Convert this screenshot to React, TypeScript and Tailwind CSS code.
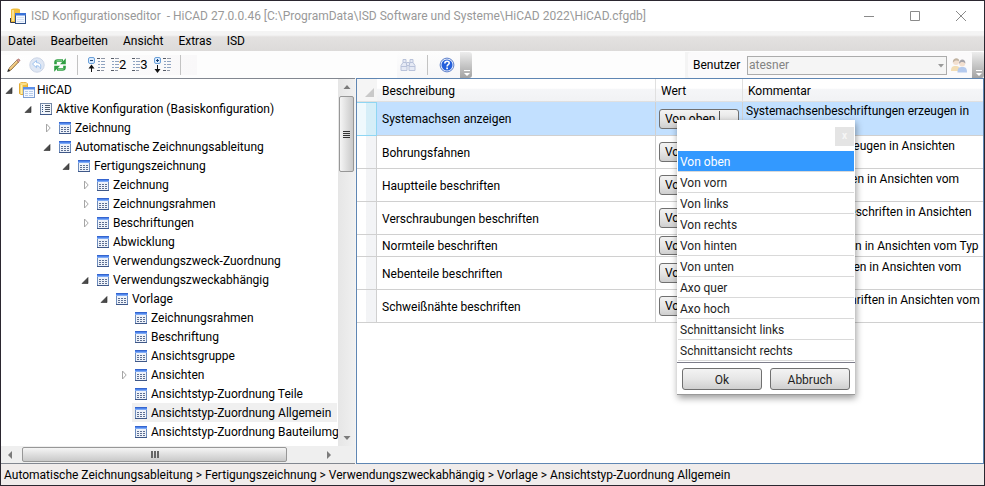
import { useState } from "react"
import type { ReactNode } from "react"
import clsx from "clsx"

type NodeIcon = "db" | "list" | "table"

interface TreeNode {
  label: string
  level: number
  state?: "open" | "closed"
  icon?: NodeIcon
}

const tree: TreeNode[] = [
  { label: "HiCAD", level: 0, state: "open", icon: "db" },
  { label: "Aktive Konfiguration (Basiskonfiguration)", level: 1, state: "open", icon: "list" },
  { label: "Zeichnung", level: 2, state: "closed" },
  { label: "Automatische Zeichnungsableitung", level: 2, state: "open" },
  { label: "Fertigungszeichnung", level: 3, state: "open" },
  { label: "Zeichnung", level: 4, state: "closed" },
  { label: "Zeichnungsrahmen", level: 4, state: "closed" },
  { label: "Beschriftungen", level: 4, state: "closed" },
  { label: "Abwicklung", level: 4 },
  { label: "Verwendungszweck-Zuordnung", level: 4 },
  { label: "Verwendungszweckabhängig", level: 4, state: "open" },
  { label: "Vorlage", level: 5, state: "open" },
  { label: "Zeichnungsrahmen", level: 6 },
  { label: "Beschriftung", level: 6 },
  { label: "Ansichtsgruppe", level: 6 },
  { label: "Ansichten", level: 6, state: "closed" },
  { label: "Ansichtstyp-Zuordnung Teile", level: 6 },
  { label: "Ansichtstyp-Zuordnung Allgemein", level: 6 },
  { label: "Ansichtstyp-Zuordnung Bauteilumgebung", level: 6 },
]

const rows = [
  { name: "Systemachsen anzeigen", comment: "Systemachsenbeschriftungen erzeugen in" },
  { name: "Bohrungsfahnen", comment: "Bohrungsfahnen erzeugen in Ansichten" },
  { name: "Hauptteile beschriften", comment: "Hauptteile beschriften in Ansichten vom" },
  { name: "Verschraubungen beschriften", comment: "Verschraubungen beschriften in Ansichten" },
  { name: "Normteile beschriften", comment: "Normteile beschriften in Ansichten vom Typ", short: true },
  { name: "Nebenteile beschriften", comment: "Nebenteile beschriften in Ansichten vom" },
  { name: "Schweißnähte beschriften", comment: "Schweißnähte beschriften in Ansichten vom" },
]

const options = [
  "Von oben",
  "Von vorn",
  "Von links",
  "Von rechts",
  "Von hinten",
  "Von unten",
  "Axo quer",
  "Axo hoch",
  "Schnittansicht links",
  "Schnittansicht rechts",
]

const buttonFace =
  "rounded-[3px] border border-[#707070] bg-linear-to-b from-[#f3f3f3] via-[#e6e6e6] to-[#cfcfcf]"

function DatabaseIcon({ className }: { className?: string }) {
  return (
    <svg viewBox="0 0 16 16" className={clsx("h-4 w-4 shrink-0", className)}>
      <path d="M0.5 2c0-2 8-2 8 0v9.500c0 1.500-8 1.500-8 0z" fill="#f0bd3c" stroke="#e3ab35" />
      <path d="M1.500 3h2v9h-2z" fill="#fff0b0" />
      <ellipse cx="4.500" cy="1.900" rx="3.500" ry="1.100" fill="#fbe08a" />
      <rect x="4.500" y="5.500" width="11" height="10" fill="#f4f8ff" stroke="#7f9fd3" />
      <rect x="4" y="5" width="12" height="2.5" fill="#5b8ee8" />
      <path d="M6 9.500h3M10 9.500h4M6 11.500h3M10 11.500h4M6 13.500h3M10 13.500h4" stroke="#b7cbe9" />
    </svg>
  )
}

function AppIcon() {
  return (
    <svg viewBox="0 0 16 16" className="h-4 w-4 shrink-0">
      <path d="M1 1.500c0-1.500 9-1.500 9 0v12.500H1z" fill="#f0bd3c" />
      <path d="M2 2h2v11H2z" fill="#fbe28e" />
      <path d="M0.500 10v4.500H6" fill="none" stroke="#3b3b46" />
      <rect x="5.500" y="5.500" width="10" height="10" fill="#f4f8ff" stroke="#2f4f86" />
      <rect x="5" y="5" width="11" height="2.500" fill="#3a72d8" />
      <path d="M7 9.500h7M7 11.500h7M7 13.500h7" stroke="#d5e1f4" />
    </svg>
  )
}

function TableIcon() {
  return (
    <svg viewBox="0 0 12 12" shapeRendering="crispEdges" className="h-3 w-3 shrink-0">
      <rect width="12" height="12" fill="#6d8cbd" />
      <rect width="12" height="1" fill="#3565cf" />
      <rect y="1" width="12" height="1" fill="#4f86ec" />
      <rect y="2" width="12" height="1" fill="#7faaf5" />
      <rect x="1" y="3" width="10" height="8" fill="#eef2f9" />
      <path
        d="M2 5.5h2M5 5.5h2M8 5.5h2M2 7.5h2M5 7.5h2M8 7.5h2M2 9.5h2M5 9.5h2M8 9.5h2"
        stroke="#5d6f92"
      />
      <rect x="0" y="11" width="12" height="1" fill="#3f5888" />
    </svg>
  )
}

function ListIcon() {
  return (
    <svg viewBox="0 0 12 12" shapeRendering="crispEdges" className="h-3 w-3 shrink-0">
      <rect width="12" height="12" fill="#7488a6" />
      <rect x="1" y="1" width="10" height="10" fill="#f1f5fb" />
      <path d="M2 2.5h1M2 4.5h1M2 6.5h1M2 8.5h1" stroke="#2b4f86" />
      <path d="M5 2.5h5M5 4.5h5M5 6.5h5M5 8.5h5" stroke="#4e5a6a" />
      <rect x="0" y="11" width="12" height="1" fill="#3f5888" />
    </svg>
  )
}

function Expander({ state }: { state?: "open" | "closed" }) {
  return (
    <svg viewBox="0 0 10 10" className="h-[10px] w-[10px] shrink-0">
      {state === "open" && <path d="M8 2.500v6H2z" fill="#4a4a4a" stroke="#262626" strokeWidth="0.6" />}
      {state === "closed" && <path d="M4.500 1v8l3.700-4z" fill="#fff" stroke="#a6a6a6" />}
    </svg>
  )
}

function PencilIcon() {
  return (
    <svg viewBox="0 0 16 16" className="h-4 w-4">
      <path d="M2.500 14l.8-3L10.800 3.300l1.800 1.700-7.600 8z" fill="#efc06c" stroke="#6b4a20" strokeWidth="0.7" />
      <path d="M4 11.500l7.300-7.600" stroke="#fbe6b8" strokeWidth="0.8" />
      <path d="M10.800 3.300l1-1c.9-.9 2.700.8 1.900 1.700l-1.100 1z" fill="#e0a09a" stroke="#8d4b46" strokeWidth="0.6" />
      <path d="M1.200 15l1-3 2.100 2z" fill="#222" />
    </svg>
  )
}

function UndoIcon() {
  return (
    <svg viewBox="0 0 16 16" className="h-4 w-4">
      <circle cx="8" cy="8" r="7.200" fill="#dfe7f4" stroke="#ccd5e6" />
      <path d="M3.500 7l4-3.500v2.200c3.500 0 5 2 4 6-.7-2-1.800-3-4-3v2z" fill="#fff" stroke="#9fc3ef" />
    </svg>
  )
}

function RefreshIcon() {
  return (
    <svg viewBox="0 0 16 16" className="h-4 w-4">
      <g fill="none" stroke="#2f9e42" strokeWidth="2.600">
        <path d="M3.500 7.200V5.500c0-1 .8-2 2-2H11" />
        <path d="M12.500 8.800v1.700c0 1-.8 2-2 2H5" />
      </g>
      <path d="M13.800 1.200v6H8zM2.200 14.800v-6H8z" fill="#2f9e42" />
      <path d="M4 4.500c.6-.9 2-1.100 6-1.100M12 11.500c-.6.900-2 1.100-6 1.100" fill="none" stroke="#98dda0" strokeWidth="0.8" />
    </svg>
  )
}

// Small tree outline used by all four level buttons
function Lines({ x }: { x: number }) {
  return (
    <g stroke="#8f96a3" transform={`translate(${x} 0)`}>
      <path d="M0 1.500h3M0 13.500h3" stroke="#555b66" />
      <path d="M4 1.500h4M4 13.500h3" />
      <path d="M1 4.500h2M4 4.500h4M1 7.500h2M4 7.500h4M1 10.500h2M4 10.500h4" stroke="#8fa3c0" />
    </g>
  )
}

function CollapseIcon({ expand }: { expand?: boolean }) {
  return (
    <svg viewBox="0 0 17 16" className="h-4 w-[17px]">
      <rect x="0.5" y="0.5" width="6" height="6" rx="1.500" fill="#d9ebff" stroke="#6ba0d8" />
      <path d="M2 3.500h3" stroke="#173e73" />
      {expand && <path d="M3.500 2v3" stroke="#173e73" />}
      {expand ? (
        <path d="M3 8h1v4h2.500l-3 4-3-4H3z" fill="#111" />
      ) : (
        <path d="M3 15h1v-3.500h2.500l-3-4-3 4H3z" fill="#111" />
      )}
      <g shapeRendering="crispEdges">
        <Lines x={9} />
      </g>
    </svg>
  )
}

function LevelIcon({ level }: { level: number }) {
  return (
    <span className="flex h-4 items-center">
      <svg viewBox="0 0 8 16" shapeRendering="crispEdges" className="h-4 w-2">
        <Lines x={0} />
      </svg>
      <span className="text-[13px] leading-4 text-black">{level}</span>
    </span>
  )
}

function BinocularsIcon() {
  return (
    <svg viewBox="0 0 16 16" className="h-4 w-4">
      <g fill="#e6eaf5" stroke="#b9c2da">
        <path d="M3 2.500h3v3l1 3v5H1v-5l2-3zM10 2.500h3v3l2 3v5H9v-5l1-3z" />
        <path d="M6.500 5.500h3v3h-3z" />
        <path d="M1 9.500h6M9 9.500h6M3 5.500h3M10 5.500h3" />
      </g>
    </svg>
  )
}

function HelpIcon() {
  return (
    <svg viewBox="0 0 16 16" className="h-4 w-4">
      <circle cx="8" cy="8" r="6.900" fill="#e8eefa" stroke="#4f74c4" strokeWidth="0.900" />
      <circle cx="8" cy="8" r="5.500" fill="#2560dc" />
      <path d="M5.800 6.500c0-3.200 4.600-2.900 4.400-.3-.1 1.400-2.100 1.500-2.100 3.200" fill="none" stroke="#fff" strokeWidth="1.600" />
      <rect x="7.200" y="10.500" width="1.800" height="1.700" fill="#fff" />
    </svg>
  )
}

function UsersIcon() {
  return (
    <svg viewBox="0 0 16 16" className="h-4 w-4 opacity-60">
      <path d="M0 14c0-4 1.500-5 4.500-5S9 10 9 14z" fill="#eecb86" />
      <circle cx="5" cy="5" r="3" fill="#efcfb5" />
      <path d="M1.800 5.500C1.500 0 8.500 0 8.200 4 6 3 4 3 1.800 5.500z" fill="#9b8468" />
      <path d="M6.500 15.500c0-4.500 1.500-5.500 4.700-5.500S16 11 16 15.500z" fill="#87abe6" />
      <circle cx="11.200" cy="6.500" r="3" fill="#efcfb5" />
      <path d="M8 7C7.700 1 14.700 1 14.400 6.500 12 4.500 10 4.500 8 7z" fill="#6f6a72" />
    </svg>
  )
}

function ToolButton({ label, children, disabled }: { label: string; children: ReactNode; disabled?: boolean }) {
  return (
    <button type="button" aria-label={label} disabled={disabled} className="flex shrink-0 items-center">
      {children}
    </button>
  )
}

function Separator() {
  return <div className="h-5 w-px shrink-0 bg-[#c3c3c3]" />
}

function OverflowGrip() {
  return (
    <div className="flex w-3 shrink-0 items-end justify-end self-stretch rounded-r-[3px] bg-linear-to-b from-[#ededed] to-[#a3a3a3] pr-[2px] pb-[2px]">
      <svg viewBox="0 0 6 6" className="h-[6px] w-[6px]">
        <path d="M0 0h6v1H0zM0 3h6L3 6z" fill="#fff" />
      </svg>
    </div>
  )
}

function TitleBar() {
  return (
    <header className="flex h-[30px] items-center bg-white pl-[9px] text-[#999]">
      <AppIcon />
      <h1 className="ml-[5px] truncate whitespace-pre">
        {"ISD Konfigurationseditor  - HiCAD 27.0.0.46 [C:\\ProgramData\\ISD Software und Systeme\\HiCAD 2022\\HiCAD.cfgdb]"}
      </h1>
      <div className="ml-auto flex h-full">
        <button type="button" aria-label="Minimieren" className="flex w-[46px] items-center justify-center">
          <svg viewBox="0 0 10 10" className="h-[10px] w-[10px]">
            <path d="M0 5.500h10" stroke="#8a8a8a" />
          </svg>
        </button>
        <button type="button" aria-label="Maximieren" className="flex w-[46px] items-center justify-center">
          <svg viewBox="0 0 10 10" className="h-[10px] w-[10px]">
            <path d="M0.500 0.500h9v9h-9z" fill="none" stroke="#8a8a8a" />
          </svg>
        </button>
        <button type="button" aria-label="Schließen" className="flex w-[46px] items-center justify-center">
          <svg viewBox="0 0 10 10" className="h-[10px] w-[10px]">
            <path d="M0 0l10 10M10 0L0 10" stroke="#8a8a8a" />
          </svg>
        </button>
      </div>
    </header>
  )
}

function MenuBar() {
  return (
    <nav className="flex h-5 items-center gap-[15px] bg-linear-to-b from-[#f4f4f4] from-20% via-[#e3e1e0] via-30% to-[#dcdad9] pl-[7px]">
      {["Datei", "Bearbeiten", "Ansicht", "Extras", "ISD"].map((item) => (
        <button key={item} type="button">
          {item}
        </button>
      ))}
    </nav>
  )
}

function Toolbar() {
  return (
    <div className="flex h-[27px] items-center bg-[#fdfdfd] pt-px">
      <div className="flex h-5 items-center bg-linear-to-r from-white to-[#f9f8f9] pl-[5px]">
        <div className="flex items-center gap-[7px]">
          <ToolButton label="Bearbeiten">
            <PencilIcon />
          </ToolButton>
          <ToolButton label="Rückgängig" disabled>
            <UndoIcon />
          </ToolButton>
          <ToolButton label="Aktualisieren">
            <RefreshIcon />
          </ToolButton>
        </div>
        <div className="flex items-center gap-[6px] pl-[9px]">
          <Separator />
          <div className="flex items-center gap-[6px] pl-1">
            <ToolButton label="Alles zuklappen">
              <CollapseIcon />
            </ToolButton>
            <ToolButton label="Ebene 2">
              <LevelIcon level={2} />
            </ToolButton>
            <ToolButton label="Ebene 3">
              <LevelIcon level={3} />
            </ToolButton>
            <ToolButton label="Alles aufklappen">
              <CollapseIcon expand />
            </ToolButton>
          </div>
          <div className="pr-4 pl-[3px]">
            <Separator />
          </div>
        </div>
      </div>
      <div className="w-[200px]" />
      <div className="flex h-full items-center gap-[11px] bg-linear-to-b from-[#fdfdfd] to-[#f6f6f8] pr-[5px] pl-[3px]">
        <ToolButton label="Suchen" disabled>
          <BinocularsIcon />
        </ToolButton>
        <Separator />
        <ToolButton label="Hilfe">
          <HelpIcon />
        </ToolButton>
      </div>
      <OverflowGrip />
      <div className="ml-auto flex h-full items-center bg-[#f4f4f4] pl-[3px]">
        <div className="flex h-full items-center rounded-[3px] bg-[#fbfafb] pr-[5px] pl-[5px]">
          <label htmlFor="benutzer" className="w-[54px]">
            Benutzer
          </label>
          <div className="relative mr-1 flex">
            <select
              id="benutzer"
              disabled
              className="h-[19px] w-[200px] appearance-none border border-[#acacac] bg-[#f5f5f5] pl-px text-[#838383]"
            >
              <option>atesner</option>
            </select>
            <svg viewBox="0 0 6 4" className="pointer-events-none absolute top-2 right-[3px] h-1 w-[6px]">
              <path d="M0 0h6L3 3.500z" fill="#9a9a9a" />
            </svg>
          </div>
          <ToolButton label="Benutzerverwaltung" disabled>
            <UsersIcon />
          </ToolButton>
        </div>
        <OverflowGrip />
      </div>
    </div>
  )
}

function TreeRow({ node, selected, onSelect }: { node: TreeNode; selected: boolean; onSelect: () => void }) {
  return (
    <li
      role="treeitem"
      aria-selected={selected}
      className="flex h-[19px] items-center"
      style={{ paddingLeft: node.level * 19 + 3 }}
    >
      <Expander state={node.state} />
      <button
        type="button"
        onClick={onSelect}
        className={clsx(
          "mr-px flex h-full flex-1 items-center whitespace-nowrap",
          node.level === 0 ? "ml-[5px] gap-[2px]" : "ml-1 gap-1 pl-[3px]",
          selected && "bg-[#f0f0f0]",
        )}
      >
        {node.icon === "db" ? <DatabaseIcon /> : node.icon === "list" ? <ListIcon /> : <TableIcon />}
        {node.label}
      </button>
    </li>
  )
}

function Arrow({ d }: { d: string }) {
  return (
    <svg viewBox="0 0 8 8" className="h-2 w-2 shrink-0">
      <path d={d} fill="#7b7b7b" />
    </svg>
  )
}

function TreePanel() {
  const [selected, setSelected] = useState(17)

  return (
    <aside className="flex w-[354px] shrink-0 flex-col border-y border-[#828790] bg-white">
      <div className="flex flex-1">
        <ul role="tree" className="min-w-0 flex-1 overflow-hidden pt-px pb-[5px]">
          {tree.map((node, i) => (
            <TreeRow key={i} node={node} selected={i === selected} onSelect={() => setSelected(i)} />
          ))}
        </ul>
        <div className="flex w-[17px] shrink-0 flex-col items-center bg-linear-to-r from-[#e6e6e6] to-[#f0f0f0] pt-1 pb-1">
          <Arrow d="M0.500 6h7L4 2z" />
          <div className="mt-[5px] flex h-[76px] w-[15px] flex-col items-center justify-center gap-px rounded-[2px] border border-[#979797] bg-linear-to-r from-[#f5f5f5] to-[#c9c9c9]">
            <div className="h-px w-[7px] bg-[#333]" />
            <div className="h-px w-[7px] bg-[#333]" />
            <div className="h-px w-[7px] bg-[#333]" />
            <div className="h-px w-[7px] bg-[#333]" />
          </div>
          <div className="mt-auto flex">
            <Arrow d="M0.500 2h7L4 6z" />
          </div>
        </div>
      </div>
      <div className="flex h-[17px] items-center bg-[#efefef] pr-[22px] pl-[5px]">
        <Arrow d="M6 0v8L2 4z" />
        <div className="ml-2 flex h-[15px] w-[265px] items-center justify-center gap-px rounded-[2px] border border-[#979797] bg-linear-to-b from-[#f5f5f5] to-[#c9c9c9]">
          <div className="h-[7px] w-[2px] bg-[#666]" />
          <div className="h-[7px] w-[2px] bg-[#666]" />
          <div className="h-[7px] w-[2px] bg-[#666]" />
        </div>
        <div className="ml-auto flex">
          <Arrow d="M2 0v8l4-4z" />
        </div>
      </div>
    </aside>
  )
}

function ValuePopup({ value, onChange }: { value: string; onChange: (v: string) => void }) {
  return (
    <div
      role="dialog"
      aria-label="Wert auswählen"
      className="absolute top-[11px] left-[18px] z-10 w-[178px] border-b border-[#999] bg-white text-[#1e1e1e] shadow-[1px_3px_7px_rgba(0,0,0,0.4)]"
    >
      <div className="flex h-[31px] items-end justify-end pr-px pb-[5px]">
        <button
          type="button"
          aria-label="Schließen"
          className="flex h-[19px] w-[19px] items-center justify-center bg-[#e4e4e4] text-[10px] font-bold text-[#f6f6f6]"
        >
          x
        </button>
      </div>
      <ul role="listbox" className="px-px pb-px">
        {options.map((option) => (
          <li key={option} role="option" aria-selected={option === value} className="border-b border-[#d9d9d9]">
            <button
              type="button"
              onClick={() => onChange(option)}
              className={clsx(
                "flex h-5 w-full items-center pt-[2px] pl-[2px]",
                option === value && "bg-[#3399ff] text-white",
              )}
            >
              {option}
            </button>
          </li>
        ))}
      </ul>
      <div className="flex gap-2 border-t border-[#7d7d8a] px-[5px] pt-[5px] pb-1">
        <button type="button" className={clsx("h-[22px] flex-1 pt-[2px]", buttonFace)}>
          Ok
        </button>
        <button type="button" className={clsx("h-[22px] flex-1 pt-[2px]", buttonFace)}>
          Abbruch
        </button>
      </div>
    </div>
  )
}

function ConfigTable() {
  const [value, setValue] = useState("Von oben")

  return (
    <section className="min-w-0 flex-1 border border-[#5f86b3] bg-white">
      <table className="w-full table-fixed border-separate border-spacing-0 text-left">
        <colgroup>
          <col className="w-5" />
          <col className="w-[279px]" />
          <col className="w-[87px]" />
          <col />
        </colgroup>
        <thead>
          <tr className="h-[23px] bg-linear-to-b from-white from-40% via-[#f5f6f8] via-45% to-[#f1f2f4]">
            <th className="border-b border-[#e0e0e0] bg-[#f5f5f5] p-0" aria-label="Zeile">
              <svg viewBox="0 0 9 9" className="mt-1 ml-2 h-[9px] w-[9px]">
                <path d="M9 0v9H0z" fill="#c9c9c9" />
              </svg>
            </th>
            <th className="border-r border-b border-[#e0e0e0] p-0 pt-px pl-[5px] font-normal">Beschreibung</th>
            <th className="border-r border-b border-[#e0e0e0] p-0 pt-px pl-[5px] font-normal">Wert</th>
            <th className="border-b border-[#e0e0e0] p-0 pt-px pl-[5px] font-normal">Kommentar</th>
          </tr>
        </thead>
        <tbody>
          {rows.map((row, i) => (
            <tr key={row.name} className={clsx(i === 0 ? "h-[34px] bg-[#c2e0ff]" : row.short ? "h-[22px]" : "h-[33px]")}>
              <td
                className={clsx(
                  "border-r border-b p-0",
                  i === 0
                    ? "border-t border-[#8fd6f3] bg-linear-to-r from-[#eff9fd] from-45% to-[#d5eef8] to-45%"
                    : "border-[#d0d0d0] bg-linear-to-r from-white from-45% to-[#f3f4f6] to-45%",
                )}
              />
              <td className="truncate border-r border-b border-[#d0d0d0] p-0 pt-px pl-[5px]">{row.name}</td>
              <td className="border-r border-b border-[#d0d0d0] p-0 pl-[3px]">
                <div className="relative flex">
                  <button
                    type="button"
                    className={clsx("flex w-20 items-center pl-[5px] whitespace-nowrap", row.short ? "h-[19px]" : "h-5", buttonFace)}
                  >
                    <span className={clsx("w-[55px] text-left", i === 0 && "border-r border-[#555]")}>
                      {i === 0 ? value : "Von oben"}
                    </span>
                  </button>
                  {i === 0 && <ValuePopup value={value} onChange={setValue} />}
                </div>
              </td>
              <td className="border-b border-[#d0d0d0] p-0 pl-[3px] align-top">
                <p
                  className={clsx(
                    "overflow-hidden whitespace-nowrap",
                    row.short ? "pt-[3px]" : i === 0 ? "pt-px" : "pt-[2px]",
                  )}
                >
                  {row.comment}
                </p>
              </td>
            </tr>
          ))}
        </tbody>
      </table>
    </section>
  )
}

export default function App() {
  return (
    <div className="flex min-h-screen flex-col overflow-hidden border border-[#2b2730] bg-[#f4f4f4] font-[Roboto,'Open_Sans',sans-serif] text-[12px] leading-4 text-black">
      <TitleBar />
      <MenuBar />
      <Toolbar />
      <main className="flex flex-1 gap-px">
        <TreePanel />
        <ConfigTable />
      </main>
      <footer className="flex h-[21px] items-center bg-[#f0eceb] pl-[3px]">
        Automatische Zeichnungsableitung &gt; Fertigungszeichnung &gt; Verwendungszweckabhängig &gt; Vorlage &gt;
        Ansichtstyp-Zuordnung Allgemein
      </footer>
    </div>
  )
}
